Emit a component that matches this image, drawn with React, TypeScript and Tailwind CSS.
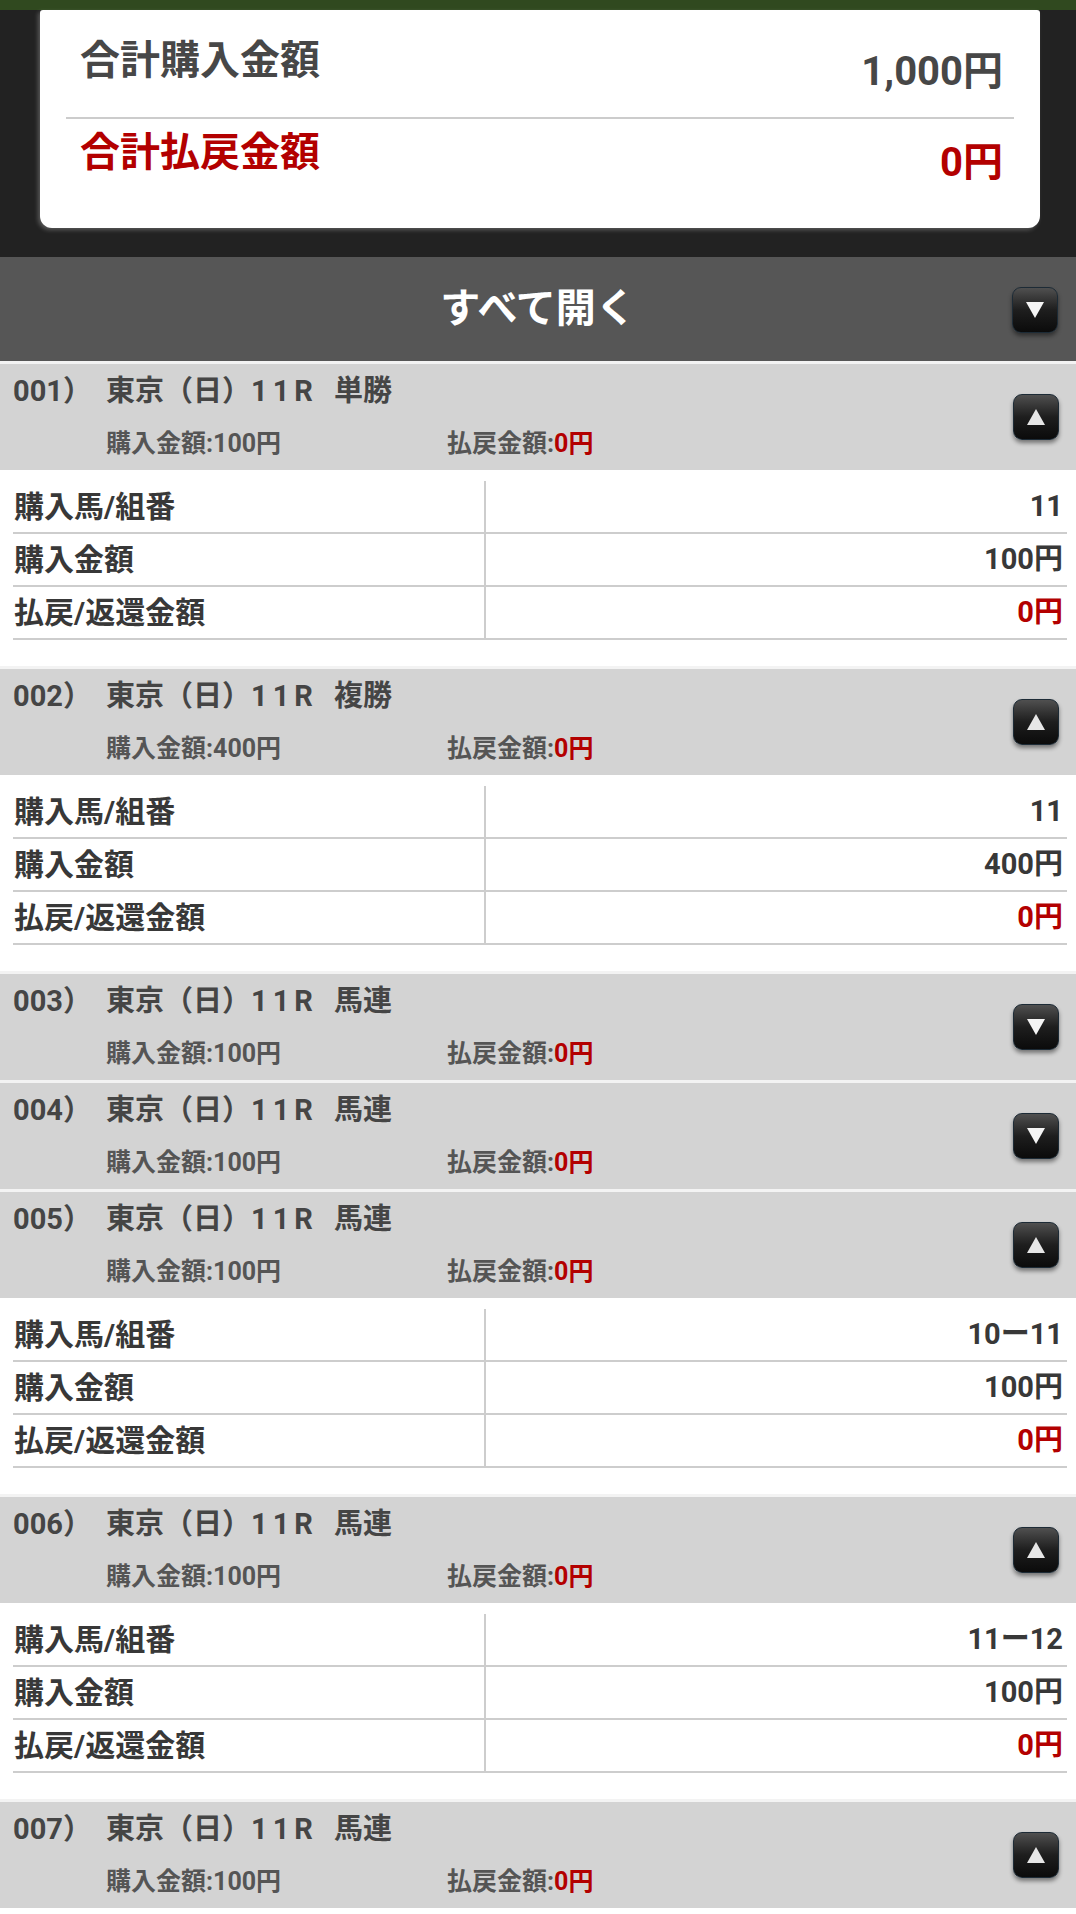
import React from "react";

interface Bet {
  no: string;
  type: string;
  amount: string;
  open: boolean;
  horse?: string;
}

const bets: Bet[] = [
  { no: "001", type: "単勝", amount: "100円", open: true, horse: "11" },
  { no: "002", type: "複勝", amount: "400円", open: true, horse: "11" },
  { no: "003", type: "馬連", amount: "100円", open: false },
  { no: "004", type: "馬連", amount: "100円", open: false },
  { no: "005", type: "馬連", amount: "100円", open: true, horse: "10ー11" },
  { no: "006", type: "馬連", amount: "100円", open: true, horse: "11ー12" },
  { no: "007", type: "馬連", amount: "100円", open: true, horse: "12ー13" },
];

const ToggleButton = ({ up }: { up: boolean }) => (
  <div className="w-[46px] h-[46px] rounded-[9px] border border-[#1d2b36] bg-linear-to-b from-[#505050] via-[#1e1e1e] to-[#0b0b0b] shadow-[0_3px_4px_rgba(0,0,0,0.45)] flex items-center justify-center">
    <svg width="20" height="18" viewBox="0 0 20 18">
      {up ? (
        <polygon points="10,1 19,17 1,17" fill="#e6e6e6" />
      ) : (
        <polygon points="1,1 19,1 10,17" fill="#f5f5f5" />
      )}
    </svg>
  </div>
);

const Row = ({ label, value, red }: { label: string; value: string; red?: boolean }) => (
  <div className="flex h-[53px] border-b-2 border-[#cdcdcd]">
    <div className="w-[473px] border-r-2 border-[#cdcdcd] pl-[1px] flex items-center text-[30px] text-[#383838]">
      {label}
    </div>
    <div
      className={
        red
          ? "flex-1 pr-[4px] flex items-center justify-end text-[29px] text-[#b30000]"
          : "flex-1 pr-[4px] flex items-center justify-end text-[29px] text-[#383838]"
      }
    >
      {value}
    </div>
  </div>
);

const BetSection = ({ bet }: { bet: Bet }) => (
  <div>
    <div className="border-t-[3px] border-[#f3f3f3] bg-[#d3d3d3] h-[109px] flex">
      <div className="flex-1 pl-[13px] pt-[9px]">
        <div className="h-[36px] leading-[36px] text-[29px] text-[#454545] flex">
          <span className="w-[93px]">{bet.no}）</span>
          <span>東京（日）</span>
          <span className="tracking-[5px]">11R</span>
          <span className="ml-[16px]">{bet.type}</span>
        </div>
        <div className="mt-[19px] h-[32px] leading-[32px] text-[25px] text-[#555] flex pl-[93px]">
          <span className="w-[341px]">購入金額:{bet.amount}</span>
          <span>
            払戻金額:<span className="text-[#b30000]">0円</span>
          </span>
        </div>
      </div>
      <div className="self-center mr-[17px]">
        <ToggleButton up={bet.open} />
      </div>
    </div>
    {bet.open && (
      <div className="bg-white pt-[11px] pb-[26px] pl-[13px] pr-[9px]">
        <Row label="購入馬/組番" value={bet.horse ?? ""} />
        <Row label="購入金額" value={bet.amount} />
        <Row label="払戻/返還金額" value="0円" red />
      </div>
    )}
  </div>
);

export default function App() {
  return (
    <div className="w-full min-h-screen bg-white font-bold font-['Roboto','Noto_Sans_CJK_JP',sans-serif]">
      <div className="h-[10px] bg-[#30491f]" />
      <div className="bg-[#222222] pl-[40px] pr-[36px] pb-[29px]">
        <div className="bg-white rounded-t-[3px] rounded-b-[12px] shadow-[-2px_2px_4px_rgba(255,255,255,0.25)]">
          <div className="h-[107px] flex items-start justify-between pl-[40px] pr-[37px] pt-[27px]">
            <div className="text-[40px] leading-[48px] text-[#474747]">合計購入金額</div>
            <div className="text-[40px] leading-[48px] text-[#474747] mt-[11px]">1,000円</div>
          </div>
          <div className="mx-[26px] h-[2px] bg-[#cccccc]" />
          <div className="h-[109px] flex items-start justify-between pl-[40px] pr-[37px] pt-[10px]">
            <div className="text-[40px] leading-[48px] text-[#b30000]">合計払戻金額</div>
            <div className="text-[40px] leading-[48px] text-[#b30000] mt-[10px]">0円</div>
          </div>
        </div>
      </div>
      <div className="h-[104px] bg-[#565656] flex items-center relative">
        <div className="flex-1 text-center text-white text-[40px]">すべて開く</div>
        <div className="absolute right-[18px] top-[30px]">
          <ToggleButton up={false} />
        </div>
      </div>
      {bets.map((b) => (
        <BetSection key={b.no} bet={b} />
      ))}
    </div>
  );
}
